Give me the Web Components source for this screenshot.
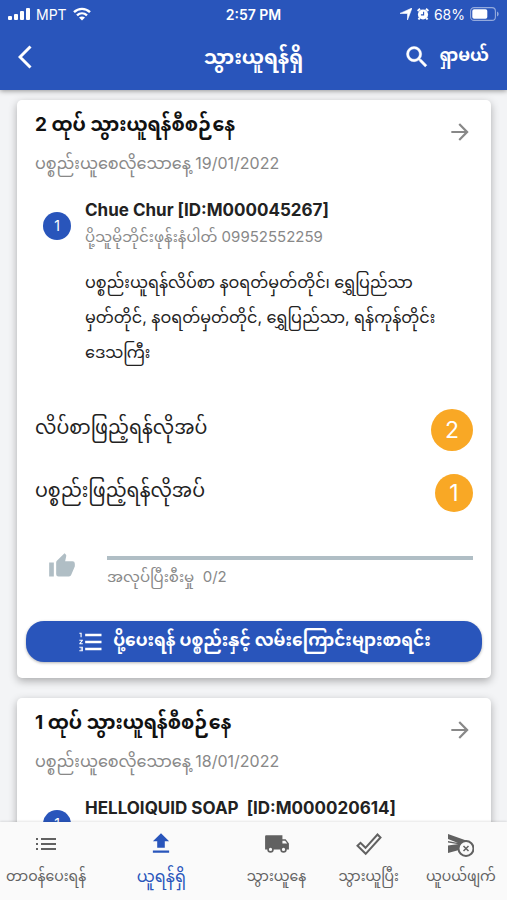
<!DOCTYPE html>
<html lang="my">
<head>
<meta charset="utf-8">
<meta name="viewport" content="width=device-width, initial-scale=1">
<title>သွားယူရန်ရှိ</title>
<style>
  html, body { margin: 0; height: 100%; }
  body { font-family: Inter, "Noto Sans Myanmar", "Noto Sans", sans-serif; background: #f3f4f6; color: #222; }
</style>
</head>
<body>
<delivery-app>
  <status-bar slot="top"></status-bar>
  <app-header slot="top" heading="သွားယူရန်ရှိ" search="ရှာမယ်"></app-header>
  <pickup-card heading="2 ထုပ် သွားယူရန်စီစဉ်နေ" date="ပစ္စည်းယူစေလိုသောနေ့ 19/01/2022">
    <sender-info number="1" name="Chue Chur [ID:M000045267]" phone="ပို့သူမိုဘိုင်းဖုန်းနံပါတ် 09952552259">ပစ္စည်းယူရန်လိပ်စာ နဝရတ်မှတ်တိုင်၊ ရွှေပြည်သာ<br>မှတ်တိုင်, နဝရတ်မှတ်တိုင်, ရွှေပြည်သာ, ရန်ကုန်တိုင်း<br>ဒေသကြီး</sender-info>
    <count-list>
      <count-row count="2">လိပ်စာဖြည့်ရန်လိုအပ်</count-row>
      <count-row count="1" small>ပစ္စည်းဖြည့်ရန်လိုအပ်</count-row>
    </count-list>
    <work-progress>အလုပ်ပြီးစီးမှု&nbsp; 0/2</work-progress>
    <route-button slot="action">ပို့ပေးရန် ပစ္စည်းနှင့် လမ်းကြောင်းများစာရင်း</route-button>
  </pickup-card>
  <pickup-card heading="1 ထုပ် သွားယူရန်စီစဉ်နေ" date="ပစ္စည်းယူစေလိုသောနေ့ 18/01/2022">
    <sender-info number="1" name="HELLOIQUID SOAP&nbsp; [ID:M000020614]" phone="ပို့သူမိုဘိုင်းဖုန်းနံပါတ်"></sender-info>
  </pickup-card>
  <tab-bar slot="bottom">
    <tab-item icon="list">တာဝန်ပေးရန်</tab-item>
    <tab-item icon="upload" active>ယူရန်ရှိ</tab-item>
    <tab-item icon="truck">သွားယူနေ</tab-item>
    <tab-item icon="check">သွားယူပြီး</tab-item>
    <tab-item icon="cancel">ယူပယ်ဖျက်</tab-item>
  </tab-bar>
</delivery-app>

<script>
const ICONS = {
  signal: ['0 0 22 14', '<g fill="currentColor"><rect x="0" y="9" width="4" height="4" rx="1"/><rect x="6" y="7" width="4" height="6" rx="1"/><rect x="12" y="4" width="4" height="9" rx="1"/><rect x="18" y="1" width="4" height="12" rx="1"/></g>'],
  wifi: ['0 0 18 14', '<g fill="none" stroke="currentColor" stroke-width="2.4"><path d="M1 5.2C5.6.8 12.4.8 17 5.2"/><path d="M4 8.4c2.9-2.7 7.1-2.7 10 0"/></g><path d="M9 13.5 6 10.6c1.8-1.5 4.2-1.5 6 0z" fill="currentColor"/>'],
  locate: ['0 0 12 12', '<path d="M12 0 7.500 12V5.500L0 5.400z" fill="currentColor" stroke="currentColor" stroke-width=".6"/>'],
  alarm: ['0 0 12 12', '<circle cx="6" cy="6.5" r="5.1" fill="currentColor"/><path d="M.6 3 3 .8M11.400 3 9 .8M2.500 10l-1 1.500M9.500 10l1 1.500" stroke="currentColor" stroke-width="2"/><path d="M6.600 3.700v3.200H3.900" fill="none" stroke="#2955bb" stroke-width="1.100"/>'],
  battery: ['0 0 29 14', '<rect x=".6" y=".6" width="24.800" height="12.800" rx="3.500" fill="none" stroke="currentColor" stroke-width="1.100" opacity=".5"/><rect x="2.300" y="2.300" width="15" height="9.400" rx="1.800" fill="currentColor"/><path d="M27 4.500c2.200 1 2.200 4 0 5z" fill="currentColor" opacity=".5"/>'],
  back: ['0 0 14 24', '<path d="M12.500 1.500 2 12l10.500 10.500" fill="none" stroke="currentColor" stroke-width="3"/>'],
  search: ['0 0 24 24', '<path d="M15.500 14h-.79l-.28-.27A6.470 6.470 0 0 0 16 9.500 6.500 6.500 0 1 0 9.500 16c1.610 0 3.090-.59 4.230-1.570l.27.28v.79l5 4.990L20.490 19zm-6 0A4.500 4.500 0 1 1 9.500 5a4.500 4.500 0 0 1 0 9z" fill="currentColor" stroke="currentColor" stroke-width=".4"/>'],
  arrow: ['0 0 24 24', '<path d="m12 4-1.410 1.410L16.170 11H4v2h12.170l-5.580 5.590L12 20l8-8z" fill="currentColor"/>'],
  thumb: ['0 0 24 24', '<path d="M1 21h4V9H1v12zm22-11a2 2 0 0 0-2-2h-6.310l.95-4.570.03-.32c0-.41-.17-.79-.44-1.060L14.170 1 7.590 7.590C7.220 7.950 7 8.450 7 9v10a2 2 0 0 0 2 2h9c.83 0 1.540-.5 1.840-1.220l3.020-7.050c.09-.23.14-.47.14-.73z" fill="currentColor"/>'],
  numbered: ['0 0 24 24', '<path d="M2 17h2v.5H3v1h1v.5H2v1h3v-4H2zm1-9h1V4H2v1h1zm-1 3h1.800L2 13.100v.9h3v-1H3.200L5 10.900V10H2zm5-6v2h14V5zm0 14h14v-2H7zm0-6h14v-2H7z" fill="currentColor"/>'],
  list: ['0 0 26 26', '<path d="M3 7h2v2H3zm0 5h2v2H3zm0 5h2v2H3zM8 7h15v2H8zm0 5h15v2H8zm0 5h15v2H8z" fill="currentColor"/>'],
  upload: ['0 0 24 24', '<path d="M8.500 15.500h7v-6h4L12 2 4.500 9.500h4zM4.500 18h15v2h-15z" fill="currentColor"/>'],
  truck: ['0 0 24 24', '<path d="M20 7.500h-3V4H2a1 1 0 0 0-1 1v12h2a3 3 0 0 0 6 0h6a3 3 0 0 0 6 0h2v-5.500zM6 18.500a1.500 1.500 0 1 1 0-3 1.500 1.500 0 0 1 0 3zm13.500-9.500 1.960 2.500H17V9zm-1.500 9.500a1.500 1.500 0 1 1 0-3 1.500 1.500 0 0 1 0 3z" fill="currentColor"/>'],
  check: ['0 0 26 26', '<path d="m1.500 14.800 3-3 5 5L21.500 3.500 24.500 6.500 9.700 22.800z" fill="none" stroke="currentColor" stroke-width="2"/>'],
  cancel: ['0 0 26 26', '<path d="M0 3 21 10.500v3H12L0 11.500zM0 14.500 11 13v6L0 22z" fill="currentColor"/><path d="M0 8v2l10 2z" fill="#fafafa"/><circle cx="18" cy="17.500" r="7.500" fill="#fafafa" stroke="currentColor" stroke-width="2"/><path d="m15.500 15 5 5m0-5-5 5" stroke="currentColor" stroke-width="1.500"/>']
};
const icon = (name, w, h = w) =>
  `<svg class="icon" aria-hidden="true" width="${w}" height="${h}" viewBox="${ICONS[name][0]}">${ICONS[name][1]}</svg>`;

class Base extends HTMLElement {
  connectedCallback() {
    if (this.shadowRoot) return;
    this.attachShadow({ mode: 'open' }).innerHTML =
      `<style>*{box-sizing:border-box}:host{display:block;box-sizing:border-box}.icon{display:block;flex:none}button{font:inherit;color:inherit;background:none;border:0;padding:0;cursor:pointer}h1,h2,h3,p{margin:0}${this.css()}</style>${this.html()}`;
  }
  a(name) { return this.getAttribute(name) ?? ''; }
  css() { return ''; }
  html() { return '<slot></slot>'; }
}

customElements.define('delivery-app', class extends Base {
  css() { return `
    :host{display:flex;flex-direction:column;height:100vh;overflow:hidden}
    header{flex:none;background:#2955bb;color:#fff;box-shadow:0 1px 5px rgba(0,0,0,.4);z-index:1}
    main{flex:1;min-height:0;overflow-y:auto;scrollbar-width:none;display:flex;flex-direction:column;gap:20px;padding:10px 16px 10px 17px}
    footer{flex:none}`; }
  html() { return `<header><slot name="top"></slot></header><main><slot></slot></main><footer><slot name="bottom"></slot></footer>`; }
});

customElements.define('status-bar', class extends Base {
  css() { return `
    :host{display:grid;grid-template-columns:1fr auto 1fr;align-items:center;height:28px;padding:0 8px;font-size:14px}
    div{display:flex;align-items:center;gap:6px}
    .time{font-weight:600}
    .end{justify-content:flex-end;gap:5px}`; }
  html() { return `<div>${icon('signal', 22, 14)}<span>MPT</span>${icon('wifi', 18, 14)}</div>
    <span class="time">2:57 PM</span>
    <div class="end">${icon('locate', 12)}${icon('alarm', 12)}<span>68%</span>${icon('battery', 29, 14)}</div>`; }
});

customElements.define('app-header', class extends Base {
  css() { return `
    :host{display:grid;grid-template-columns:1fr auto 1fr;align-items:center;height:62px;padding:0 18px 4px}
    h1{font-size:20px;line-height:40px;font-weight:700}
    .search{justify-self:end;display:flex;align-items:center;gap:8px;font-size:17px;font-weight:700;white-space:nowrap}
    .back{justify-self:start}`; }
  html() { return `<button class="back" aria-label="Back">${icon('back', 14, 24)}</button>
    <h1>${this.a('heading')}</h1>
    <button class="search">${icon('search', 28)}<span>${this.a('search')}</span></button>`; }
});

customElements.define('pickup-card', class extends Base {
  css() { return `
    :host{flex:none;background:#fff;border-radius:5px;box-shadow:0 3px 8px rgba(0,0,0,.3);padding:5px 18px 16px}
    .top{display:flex;justify-content:space-between;align-items:flex-start}
    .go{padding-top:14px;color:#888}
    h2{font-size:19px;line-height:40px;font-weight:700;color:#111;white-space:nowrap}
    .date{font-size:16px;line-height:36px;color:#888;white-space:nowrap}
    .action{display:block;margin:0 -9px}`; }
  html() { return `<div class="top"><div><h2>${this.a('heading')}</h2><p class="date">${this.a('date')}</p></div>
    <button class="go" aria-label="Open">${icon('arrow', 26)}</button></div>
    <slot></slot><slot class="action" name="action"></slot>`; }
});

customElements.define('sender-info', class extends Base {
  css() { return `
    :host{display:grid;grid-template-columns:28px 1fr;column-gap:14px;padding:15px 0 0 8px}
    .num{align-self:center;width:28px;height:28px;border-radius:50%;background:#2955bb;color:#fff;font-size:14px;line-height:28px;text-align:center}
    .who{padding-bottom:0}
    .num{margin-top:6px}
    h3{font-size:17px;line-height:28px;font-weight:700;white-space:nowrap}
    .phone{font-size:15px;line-height:26px;color:#888;white-space:nowrap}
    .addr{grid-column:2;font-size:16px;line-height:35px;padding-top:15px}`; }
  html() { return `<span class="num">${this.a('number')}</span>
    <div class="who"><h3>${this.a('name')}</h3><p class="phone">${this.a('phone')}</p></div>
    <p class="addr"><slot></slot></p>`; }
});

customElements.define('count-list', class extends Base {
  css() { return `:host{padding-top:28px}`; }
});

customElements.define('count-row', class extends Base {
  css() { return `
    :host{display:flex;align-items:center;justify-content:space-between;height:63px;font-size:19px}
    span:first-child{padding-top:4px}
    .badge{flex:none;width:42px;height:42px;line-height:42px;border-radius:50%;background:#f9a825;color:#fff;text-align:center;font-size:23px}
    :host([small]) .badge{width:38px;height:38px;line-height:38px}`; }
  html() { return `<span><slot></slot></span><span class="badge">${this.a('count')}</span>`; }
});

customElements.define('work-progress', class extends Base {
  css() { return `
    :host{display:flex;align-items:flex-start;gap:31px;padding:28px 0 28px 13px;color:#888}
    .icon{color:#b0bec5}
    .body{flex:1;padding-top:4px}
    .track{height:4px;background:#b0bec5}
    p{font-size:15px;line-height:32px;padding-top:1px}`; }
  html() { return `${icon('thumb', 28)}<div class="body"><div class="track" role="progressbar" aria-label="progress" aria-valuemin="0" aria-valuemax="2" aria-valuenow="0"></div><p><slot></slot></p></div>`; }
});

customElements.define('route-button', class extends Base {
  css() { return `
    button{display:flex;align-items:center;justify-content:center;gap:8px;width:100%;height:41px;border-radius:18px;background:#2955bb;color:#fff;font-size:17px;font-weight:700;white-space:nowrap;box-shadow:0 1px 3px rgba(0,0,0,.3)}`; }
  html() { return `<button>${icon('numbered', 28)}<span><slot></slot></span></button>`; }
});

customElements.define('tab-bar', class extends Base {
  css() { return `:host{height:78px;background:#fafafa;box-shadow:0 -1px 2px rgba(0,0,0,.1);position:relative}
    nav{display:grid;grid-template-columns:2fr 3fr 2fr 2fr 2fr;height:100%}`; }
  html() { return '<nav><slot></slot></nav>'; }
});

customElements.define('tab-item', class extends Base {
  css() { return `
    button{width:100%;display:flex;flex-direction:column;align-items:center;gap:2px;padding-top:9px;color:#616161;font-size:14px;line-height:34px;white-space:nowrap}
    :host([active]) button{color:#2955bb;font-size:16px}`; }
  html() { return `<button${this.hasAttribute('active') ? ' aria-current="page"' : ''}>${icon(this.a('icon'), 26)}<span><slot></slot></span></button>`; }
});
</script>
</body>
</html>
